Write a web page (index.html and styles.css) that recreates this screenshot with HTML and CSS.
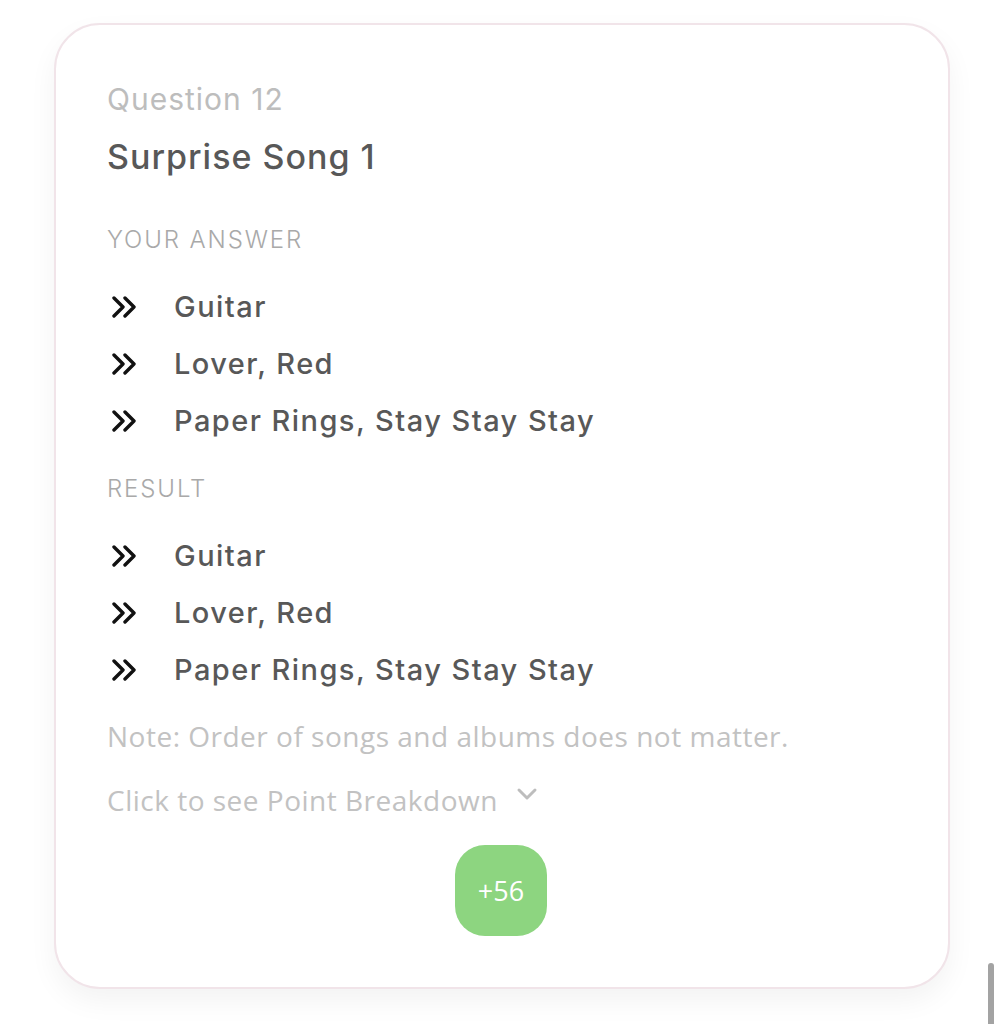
FILE: index.html
```html
<!DOCTYPE html>
<html>
<head>
<meta charset="utf-8">
<link rel="stylesheet" href="styles.css">
</head>
<body>
<div class="card">
  <div class="qnum">Question 12</div>
  <div class="qtitle">Surprise Song 1</div>
  <div class="label label-first">YOUR ANSWER</div>
  <ul class="items">
    <li><svg class="chev" viewBox="0 0 26 22"><path d="M2 2 L11 11 L2 20 M13 2 L22 11 L13 20"/></svg><span>Guitar</span></li>
    <li><svg class="chev" viewBox="0 0 26 22"><path d="M2 2 L11 11 L2 20 M13 2 L22 11 L13 20"/></svg><span>Lover, Red</span></li>
    <li><svg class="chev" viewBox="0 0 26 22"><path d="M2 2 L11 11 L2 20 M13 2 L22 11 L13 20"/></svg><span>Paper Rings, Stay Stay Stay</span></li>
  </ul>
  <div class="label">RESULT</div>
  <ul class="items">
    <li><svg class="chev" viewBox="0 0 26 22"><path d="M2 2 L11 11 L2 20 M13 2 L22 11 L13 20"/></svg><span>Guitar</span></li>
    <li><svg class="chev" viewBox="0 0 26 22"><path d="M2 2 L11 11 L2 20 M13 2 L22 11 L13 20"/></svg><span>Lover, Red</span></li>
    <li><svg class="chev" viewBox="0 0 26 22"><path d="M2 2 L11 11 L2 20 M13 2 L22 11 L13 20"/></svg><span>Paper Rings, Stay Stay Stay</span></li>
  </ul>
  <div class="note">Note: Order of songs and albums does not matter.</div>
  <div class="breakdown">Click to see Point Breakdown <svg class="down" viewBox="0 0 22 14"><path d="M3 3 L11 11 L19 3"/></svg></div>
  <div class="badge-row"><div class="badge">+56</div></div>
</div>
<div class="scrollbar"></div>
</body>
</html>
```
FILE: styles.css
```css
html, body {
  margin: 0;
  padding: 0;
  background: #ffffff;
}
body {
  width: 1004px;
  height: 1024px;
  overflow: hidden;
  position: relative;
  font-family: "Inter", "Lato", sans-serif;
}
.card {
  box-sizing: border-box;
  margin: 23px 0 0 54px;
  width: 896px;
  height: 966px;
  border: 2px solid #f1e4e9;
  border-radius: 46px;
  background: #fff;
  box-shadow: 0 12px 28px rgba(0, 0, 0, 0.05);
  padding: 54px 51px 0 51px;
}
.qnum {
  font-size: 30px;
  letter-spacing: 1px;
  line-height: 40px;
  color: #bdbdbd;
}
.qtitle {
  margin-top: 14px;
  font-size: 34px;
  letter-spacing: 1px;
  font-weight: 500;
  line-height: 48px;
  color: #585858;
}
.label {
  font-weight: 300;
  font-size: 24px;
  letter-spacing: 1.9px;
  line-height: 34px;
  color: #a9a9a9;
  margin-top: 23px;
}
.label-first {
  margin-top: 42px;
}
.items {
  list-style: none;
  margin: 21px 0 0 0;
  padding: 0;
}
.items li {
  display: flex;
  align-items: center;
  height: 57px;
  font-size: 29px;
  letter-spacing: 1.45px;
  font-weight: 500;
  color: #585858;
}
.chev {
  width: 26px;
  height: 22px;
  margin-left: 5px;
  margin-right: 36px;
  fill: none;
  stroke: #111;
  stroke-width: 3.4;
  stroke-linecap: round;
  stroke-linejoin: round;
}
.note {
  margin-top: 18px;
  font-family: "Open Sans", sans-serif;
  font-size: 28px;
  letter-spacing: 0.5px;
  line-height: 40px;
  color: #c2c2c2;
}
.breakdown {
  margin-top: 24px;
  font-family: "Open Sans", sans-serif;
  font-size: 28px;
  letter-spacing: 0.5px;
  line-height: 40px;
  color: #c2c2c2;
  display: flex;
  align-items: center;
}
.down {
  width: 22px;
  height: 14px;
  margin-left: 18px;
  margin-top: -12px;
  fill: none;
  stroke: #bdbdbd;
  stroke-width: 3;
  stroke-linecap: round;
  stroke-linejoin: round;
}
.badge-row {
  margin-top: 25px;
  display: flex;
  justify-content: center;
  padding-right: 2px;
}
.badge {
  width: 92px;
  height: 91px;
  border-radius: 30px;
  background: #8dd580;
  color: #fff;
  font-family: "Open Sans", sans-serif;
  font-size: 27px;
  display: flex;
  align-items: center;
  justify-content: center;
}
.scrollbar {
  position: absolute;
  left: 988px;
  top: 963px;
  width: 6px;
  height: 70px;
  border-radius: 3px;
  background: #a3a3a3;
}
```
